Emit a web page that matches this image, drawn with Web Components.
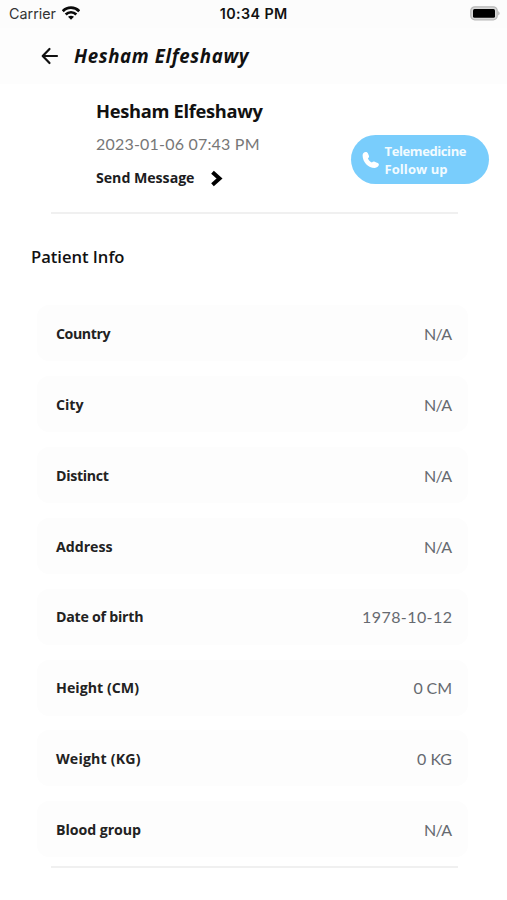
<!DOCTYPE html>
<html lang="en">
<head>
<meta charset="utf-8">
<title>Patient</title>
<style>
body { margin: 0; background: #fff; font-family: "Open Sans", Lato, sans-serif; color: #1c1c1e; }
</style>
</head>
<body>
<patient-screen></patient-screen>
<script>
// Text whose letter spacing is set so that it is as wide as its "w" attribute.
class FitText extends HTMLElement {
  connectedCallback() {
    const root = this.attachShadow({ mode: 'open' });
    root.innerHTML = `<style>:host{display:block;white-space:nowrap;width:max-content}span{display:inline-block}</style><span></span>`;
    const span = root.querySelector('span');
    const text = this.getAttribute('text');
    span.textContent = text;
    const w = parseFloat(this.getAttribute('w'));
    const gap = (w - span.getBoundingClientRect().width) / (text.length - 1);
    span.style.letterSpacing = gap + 'px';
    span.style.marginRight = -gap + 'px';
  }
}

class StatusBar extends HTMLElement {
  connectedCallback() {
    this.attachShadow({ mode: 'open' }).innerHTML = `<style>
      :host{display:grid;grid-template-columns:1fr auto 1fr;align-items:center;height:28px;padding:0 6px 0 9px;box-sizing:border-box;background:#fcfcfc;font-family:Inter,sans-serif;font-size:14.3px;line-height:18px}
      .left{display:flex;align-items:center;gap:6px;color:#333}
      .time{font-weight:600;color:#111;margin-left:-3px}
      .batt{justify-self:end;display:block;margin-top:-1px}
      svg{display:block}
    </style>
    <div class="left"><fit-text text="Carrier" w="47"></fit-text>
      <svg width="18" height="14" viewBox="0 0 18 14" style="margin-top:-2px"><g fill="none" stroke="#0a0a0a" stroke-width="2.7"><path d="M.8 5.2C5.3.5 12.7.5 17.2 5.2"/><path d="M3.7 8.5C6.600 5.500 11.400 5.500 14.300 8.500"/></g><path d="M9 13.700 6 10.800q3-2.300 6 0z" fill="#0a0a0a"/></svg></div>
    <fit-text class="time" text="10:34 PM" w="67.5"></fit-text>
    <svg class="batt" width="31" height="15" viewBox="0 0 31 15"><rect x=".8" y=".8" width="26.4" height="13" rx="4" fill="#d8d8d8" stroke="#b8b8b8" stroke-width="1.3"/><rect x="3" y="3" width="22" height="8.800" rx="1.5" fill="#000"/><path d="M28.3 5q2.600 2.300 0 4.600z" fill="#aaa"/></svg>`;
  }
}

class NavHeader extends HTMLElement {
  connectedCallback() {
    this.attachShadow({ mode: 'open' }).innerHTML = `<style>
      :host{display:flex;align-items:center;height:56px;padding-left:41px;gap:15px;box-sizing:border-box;background:#fdfdfd;font-size:18.7px;line-height:24px;font-weight:700;font-style:italic;color:#111}
      svg{display:block}
    </style>
    <svg width="18" height="18" viewBox="0 0 18 18" fill="none" stroke="#111" stroke-width="2.2" stroke-linecap="round" stroke-linejoin="round"><path d="M16 9H2M8.500 2 1.700 9l6.800 7"/></svg>
    <fit-text text="${this.getAttribute('name')}" w="174.5"></fit-text>`;
  }
}

class CallPill extends HTMLElement {
  connectedCallback() {
    this.attachShadow({ mode: 'open' }).innerHTML = `<style>
      :host{display:flex;align-items:center;width:138px;height:49px;border-radius:25px;background:#79cdfc;box-sizing:border-box;padding-left:11px;gap:5px;color:#f2fbff;font-size:13px;line-height:18px;font-weight:700}
      svg{display:block}
    </style>
    <svg width="18" height="18" viewBox="0 0 18 18"><path fill="#fff" d="M.6 4.400C.6 2.600 2 1 3.700 1c1.300 0 2 .7 2.400 1.700l.8 2c.4 1.100 0 1.800-1 2.600.5 1.800 2 3.500 4 4.300 1-1 1.800-1.200 2.800-.8l2.300.900c1.200.4 1.900 1 1.900 1.900 0 1.900-1.900 3.300-4.200 3.300C6.200 16.900.6 10.800.6 4.400z"/></svg>
    <div><fit-text text="Telemedicine" w="82"></fit-text><fit-text text="Follow up" w="63"></fit-text></div>`;
  }
}

class PatientSummary extends HTMLElement {
  connectedCallback() {
    this.attachShadow({ mode: 'open' }).innerHTML = `<style>
      :host{display:grid;grid-template-columns:1fr auto;align-items:start;height:130px;box-sizing:border-box;padding:15px 18.5px 0 96px}
      .name{font-size:18.3px;font-weight:700;line-height:24px;color:#111}
      .date{font-family:Lato,sans-serif;font-size:16px;line-height:20px;margin-top:11px;color:#777}
      .send{display:flex;align-items:center;gap:16px;margin-top:14px;font-size:14.2px;font-weight:700;line-height:20px}
      call-pill{margin-top:36px}
      svg{display:block}
    </style>
    <div>
      <fit-text class="name" text="Hesham Elfeshawy" w="167"></fit-text>
      <fit-text class="date" text="2023-01-06 07:43 PM" w="163.5"></fit-text>
      <div class="send"><fit-text text="Send Message" w="98.5"></fit-text>
      <svg width="12" height="17" viewBox="0 0 12 17"><path d="M1.500 2.300 8.500 8.500l-7 6.200" fill="none" stroke="#000" stroke-width="4"/></svg></div>
    </div>
    <call-pill></call-pill>`;
  }
}

class InfoRow extends HTMLElement {
  connectedCallback() {
    const a = n => this.getAttribute(n);
    this.attachShadow({ mode: 'open' }).innerHTML = `<style>
      :host{display:flex;align-items:center;justify-content:space-between;height:56px;box-sizing:border-box;padding:1.400px 16px 0 19px;border-radius:12px;background:#fdfdfd}
      .label{font-size:14.2px;font-weight:700;line-height:20px;color:#222}
      .value{font-family:Lato,sans-serif;font-size:16px;line-height:20px;color:#666a70}
    </style>
    <fit-text class="label" text="${a('label')}" w="${a('lw')}"></fit-text>
    <fit-text class="value" text="${a('value')}" w="${a('vw')}"></fit-text>`;
  }
}

class PageRule extends HTMLElement {
  connectedCallback() {
    this.attachShadow({ mode: 'open' }).innerHTML = `<style>:host{display:block;height:2px;background:#f0f0f0;margin:0 49px 0 51px}</style>`;
  }
}

class PatientScreen extends HTMLElement {
  connectedCallback() {
    const rows = [
      ['Country', 54.5, 'N/A', 28], ['City', 27.5, 'N/A', 28], ['Distinct', 53, 'N/A', 28], ['Address', 56.5, 'N/A', 28],
      ['Date of birth', 87.5, '1978-10-12', 90], ['Height (CM)', 83, '0 CM', 38.5], ['Weight (KG)', 84.5, '0 KG', 35], ['Blood group', 85, 'N/A', 28]
    ];
    this.attachShadow({ mode: 'open' }).innerHTML = `<style>
      :host{display:flex;flex-direction:column;height:900px;overflow:hidden;background:#fff}
      .heading{font-size:16.6px;font-weight:650;line-height:22px;margin:32px 0 0 31px;color:#111}
      .list{display:flex;flex-direction:column;gap:14.85px;margin:37.3px 39px 8.700px 37px}
    </style>
    <status-bar></status-bar>
    <nav-header name="Hesham Elfeshawy"></nav-header>
    <patient-summary></patient-summary>
    <page-rule style="margin-top:-2px"></page-rule>
    <fit-text class="heading" text="Patient Info" w="93.5"></fit-text>
    <div class="list">${rows.map(r => `<info-row label="${r[0]}" lw="${r[1]}" value="${r[2]}" vw="${r[3]}"></info-row>`).join('')}</div>
    <page-rule></page-rule>`;
  }
}

customElements.define('fit-text', FitText);
customElements.define('status-bar', StatusBar);
customElements.define('nav-header', NavHeader);
customElements.define('call-pill', CallPill);
customElements.define('patient-summary', PatientSummary);
customElements.define('info-row', InfoRow);
customElements.define('page-rule', PageRule);
customElements.define('patient-screen', PatientScreen);
</script>
</body>
</html>
